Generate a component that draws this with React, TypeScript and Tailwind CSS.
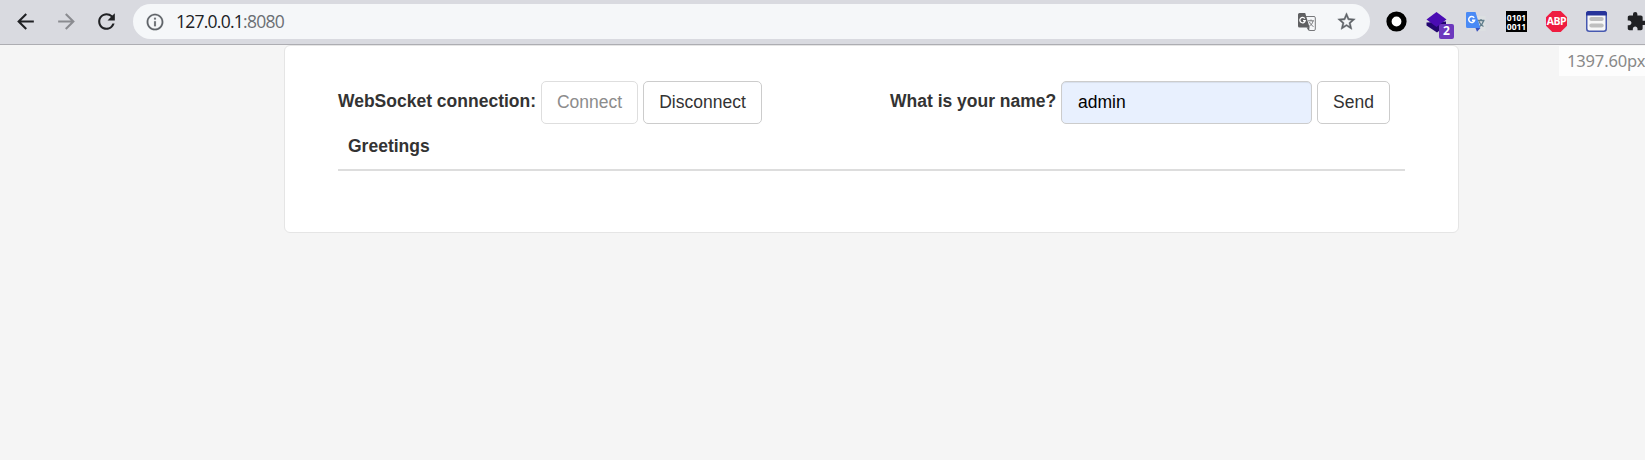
import React from "react";

function BackIcon({ className }: { className: string }) {
  return (
    <svg viewBox="0 0 24 24" className={className} fill="currentColor">
      <path d="M20 11H7.83l5.59-5.59L12 4l-8 8 8 8 1.41-1.41L7.83 13H20z" />
    </svg>
  );
}

function Toolbar() {
  return (
    <header className="flex h-[45px] shrink-0 items-start overflow-hidden border-b border-[#adadb2] bg-[#d9dae0] pt-[4px]">
      <div className="flex h-[35px] w-[133px] shrink-0 items-center gap-[16px] pl-[13px]">
        <BackIcon className="-mt-px size-[25px] shrink-0 text-[#202124]" />
        <BackIcon className="-mt-px size-[25px] shrink-0 rotate-180 text-[#8a8b90]" />
        <svg viewBox="0 0 24 24" className="-ml-px size-[25px] shrink-0" fill="#202124">
          <path d="M17.65 6.35A7.958 7.958 0 0 0 12 4c-4.42 0-7.99 3.58-7.99 8s3.57 8 7.99 8c3.73 0 6.84-2.55 7.73-6h-2.08A5.99 5.99 0 0 1 12 18c-3.31 0-6-2.69-6-6s2.69-6 6-6c1.66 0 3.14.69 4.22 1.78L13 11h7V4z" />
        </svg>
      </div>
      <div className="flex h-[35px] w-[1237px] shrink-0 items-center rounded-full bg-[#f5f7f9] pl-[12px] pr-[13px]">
        <svg viewBox="0 0 24 24" className="size-5 shrink-0" fill="#5f6368" stroke="#5f6368" strokeWidth="0.2">
          <path d="M11 17h2v-6h-2v6zm1-15C6.48 2 2 6.48 2 12s4.48 10 10 10 10-4.48 10-10S17.52 2 12 2zm0 18c-4.41 0-8-3.59-8-8s3.59-8 8-8 8 3.59 8 8-3.59 8-8 8zM11 9h2V7h-2v2z" />
        </svg>
        <div className="ml-[11px] flex-1 font-['Open_Sans',sans-serif] text-[17.5px] leading-none tracking-[-0.75px] text-[#202124]">
          127.0.0.1<span className="text-[#6b6f74]">:8080</span>
        </div>
        <svg viewBox="0 0 18 18" className="mr-[20px] size-[18px] shrink-0">
          <path d="M7 3.5h9a1.300 1.300 0 0 1 1.300 1.300v11.400a1.300 1.300 0 0 1-1.300 1.300h-4.800L7 3.500z" fill="#f5f7f9" stroke="#77787b" />
          <path d="M1.500 0h5.700l4.400 14.500H1.500A1.500 1.500 0 0 1 0 13V1.500A1.500 1.500 0 0 1 1.500 0z" fill="#5f6062" />
          <path d="M8.600 14.500h3L10.500 17.800z" fill="#5f6062" />
          <path d="M6.800 5.600A2.700 2.700 0 1 0 7.200 7.700H5" fill="none" stroke="#fff" strokeWidth="1.300" />
          <path d="M10 7.800h6M13 6.500v1.300M15 8c-.5 2.500-2 4.200-3.800 5.200M11.500 9c.8 2 2.200 3.500 4 4.500" fill="none" stroke="#77787b" />
        </svg>
        <svg viewBox="0 0 24 24" className="size-[21px] shrink-0" fill="#5f6368" stroke="#5f6368" strokeWidth="0.5">
          <path d="m22 9.240-7.190-.620L12 2 9.190 8.630 2 9.240l5.460 4.730L5.820 21 12 17.270 18.180 21l-1.630-7.030L22 9.240zM12 15.400l-3.760 2.270 1-4.280-3.320-2.880 4.380-.380L12 6.100l1.710 4.040 4.380.380-3.320 2.880 1 4.280L12 15.400z" />
        </svg>
      </div>
      <div className="flex h-[35px] shrink-0 items-center pl-[16px]">
        <svg viewBox="0 0 21 21" className="mr-[19px] size-[21px]">
          <circle cx="10.500" cy="10.500" r="7.500" fill="#fff" stroke="#000" strokeWidth="5.200" />
        </svg>
        <div className="relative mr-[12px] h-[28px] w-[28px]">
          <svg viewBox="0 0 28 28" className="size-[28px]">
            <path d="M0.500 14.500v3L11 24.500l9-7v-4z" fill="#22066f" />
            <path d="M10.500 4 20.500 11.500 10.500 19 0.500 11.500z" fill="#4a0cb3" />
          </svg>
          <span className="absolute left-[13px] top-[16px] flex h-[15px] w-[15px] items-center justify-center rounded-[2px] bg-[#6c38bd] font-['Open_Sans',sans-serif] text-[12px] font-bold leading-none text-white">2</span>
        </div>
        <svg viewBox="0 0 20 20" className="mr-[20px] size-[20px]">
          <path d="M8 4h11.500v15H12z" fill="#dcdfe1" />
          <path d="M11.500 8.500h7M15 7v1.500M17.500 9c-.7 3-2.500 4.500-4.500 6M13 9.500c1 2.500 2.500 4 4.500 5" stroke="#607d8b" strokeWidth="1.300" fill="none" />
          <path d="M1.200 0H9.500l4.800 16H1.500A1.500 1.500 0 0 1 0 14.500V1.200A1.200 1.200 0 0 1 1.200 0z" fill="#4a8af5" />
          <path d="M9.500 16h5L11 19.800z" fill="#3b52bd" />
          <path d="M8.200 5.800A3 3 0 1 0 8.600 8.300H6" fill="none" stroke="#fff" strokeWidth="1.500" />
        </svg>
        <div className="mr-[19px] flex h-[21px] w-[21px] flex-col items-center justify-center bg-black font-['Noto_Sans','Open_Sans',sans-serif] text-[8.500px] font-bold leading-[9px] text-white">
          <span>0101</span>
          <span>0011</span>
        </div>
        <div className="relative mr-[19px] h-[21px] w-[21px]">
          <svg viewBox="0 0 21 21" className="size-[21px]">
            <path d="M6.300 0h8.400L21 6.300v8.400L14.700 21H6.300L0 14.700V6.300z" fill="#ef1c40" />
          </svg>
          <span className="absolute inset-0 flex items-center justify-center font-['Open_Sans',sans-serif] text-[10.500px] font-bold leading-none tracking-[-0.500px] text-white">ABP</span>
        </div>
        <svg viewBox="0 0 21 21" className="mr-[19px] size-[21px]">
          <rect x="0.750" y="0.750" width="19.500" height="19.500" rx="2.500" fill="#f7f7f7" stroke="#4658b0" strokeWidth="1.500" />
          <path d="M2.500 0h16A2.500 2.500 0 0 1 21 2.500V4.500H0V2.500A2.500 2.500 0 0 1 2.500 0z" fill="#27349a" />
          <rect x="3.300" y="6" width="14.400" height="4" rx="2" fill="#bfbfbf" />
          <rect x="3.300" y="12.500" width="14.400" height="4" rx="2" fill="#bfbfbf" />
        </svg>
        <svg viewBox="0 0 24 24" className="size-[21px] shrink-0" fill="#202124">
          <path d="M20.500 11H19V7c0-1.100-.9-2-2-2h-4V3.500a2.500 2.500 0 0 0-5 0V5H4c-1.100 0-1.990.9-1.990 2v3.800H3.500c1.490 0 2.700 1.210 2.700 2.700s-1.210 2.700-2.700 2.700H2V20c0 1.100.9 2 2 2h3.800v-1.500c0-1.490 1.210-2.700 2.700-2.700s2.700 1.210 2.700 2.700V22H17c1.100 0 2-.9 2-2v-4h1.500a2.500 2.500 0 0 0 0-5z" />
        </svg>
      </div>
    </header>
  );
}

export default function App() {
  return (
    <div className="relative flex h-[460px] w-[1645px] flex-col overflow-hidden bg-[#f5f5f5] font-['Liberation_Sans',Arial,sans-serif] text-[17.5px] leading-[25px] text-[#333]">
      <Toolbar />
      <main className="ml-[284px] h-[188px] w-[1175px] rounded-[6px] border border-[#e5e5e5] bg-white pl-[53px] pr-[53px] pt-[35px]">
        <div className="flex h-[43px]">
          <form className="flex w-[552px]" onSubmit={(e) => e.preventDefault()}>
            <label className="w-[203px] whitespace-nowrap pt-[8px] font-bold">WebSocket connection:</label>
            <button disabled className="mr-[5px] w-[97px] rounded-[5px] border border-[#dedede] pb-px text-[#8c8c8c]">Connect</button>
            <button className="w-[119px] rounded-[5px] border border-[#ccc] pb-px">Disconnect</button>
          </form>
          <form className="flex" onSubmit={(e) => e.preventDefault()}>
            <label className="w-[171px] whitespace-nowrap pt-[8px] font-bold">What is your name?</label>
            <input
              defaultValue="admin"
              className="mr-[5px] w-[251px] rounded-[5px] border border-[#ccc] bg-[#e8f0fe] px-[16px] pb-px text-black shadow-[inset_0_1px_1px_rgba(0,0,0,0.075)] outline-none"
            />
            <button className="w-[73px] rounded-[5px] border border-[#ccc] pb-px">Send</button>
          </form>
        </div>
        <table className="w-[1067px] border-collapse">
          <thead>
            <tr>
              <th className="h-[46px] border-b-2 border-[#ddd] pb-0 pl-[10px] pt-[10px] text-left align-top font-bold">Greetings</th>
            </tr>
          </thead>
        </table>
      </main>
      <div className="absolute left-[1559px] top-[46px] h-[30px] w-[86px] whitespace-nowrap bg-[#fdfdfd] pl-[8px] font-['Noto_Sans',sans-serif] text-[16.5px] leading-[30px] tracking-[-0.15px] text-[#888]">
        1397.60px
      </div>
    </div>
  );
}
